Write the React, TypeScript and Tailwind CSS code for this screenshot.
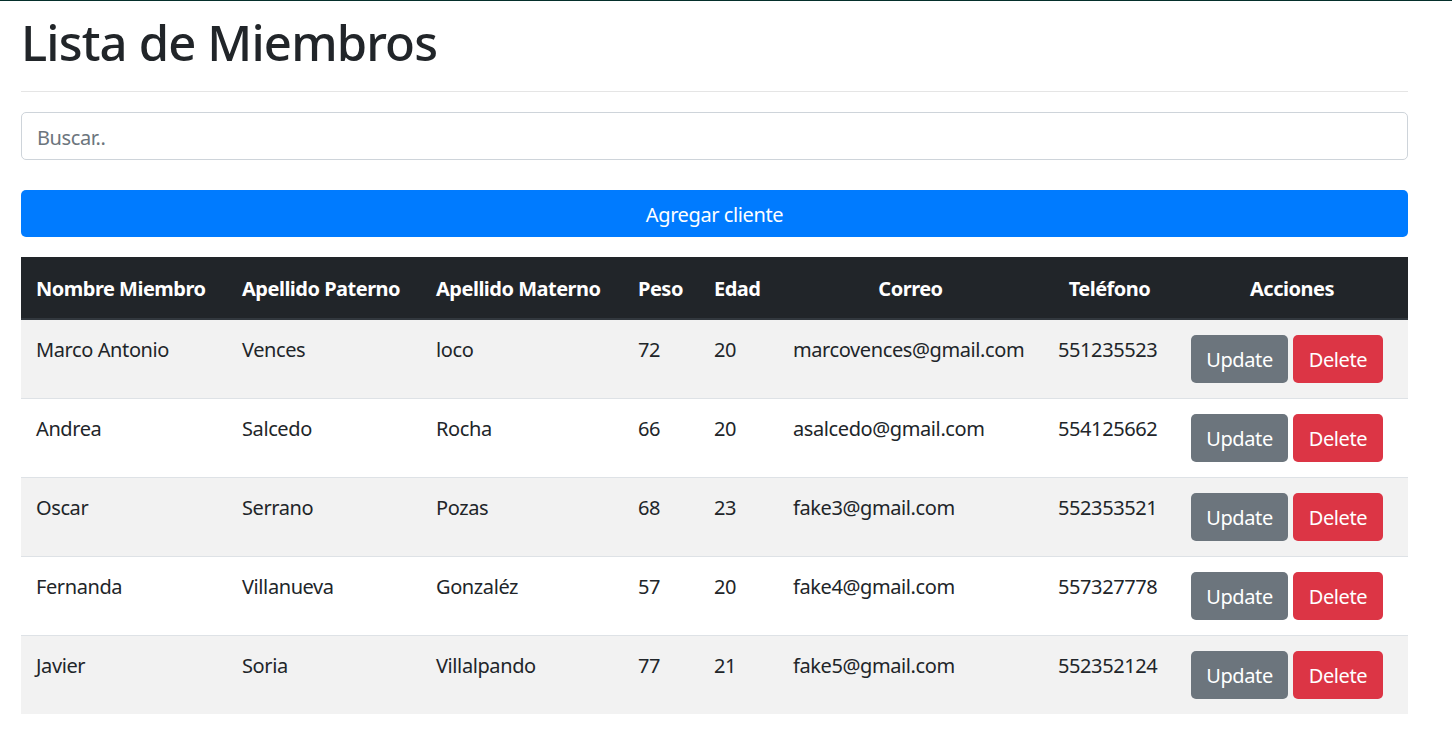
import React from "react";

interface Miembro {
  nombre: string;
  paterno: string;
  materno: string;
  peso: number;
  edad: number;
  correo: string;
  telefono: string;
}

const miembros: Miembro[] = [
  { nombre: "Marco Antonio", paterno: "Vences", materno: "loco", peso: 72, edad: 20, correo: "marcovences@gmail.com", telefono: "551235523" },
  { nombre: "Andrea", paterno: "Salcedo", materno: "Rocha", peso: 66, edad: 20, correo: "asalcedo@gmail.com", telefono: "554125662" },
  { nombre: "Oscar", paterno: "Serrano", materno: "Pozas", peso: 68, edad: 23, correo: "fake3@gmail.com", telefono: "552353521" },
  { nombre: "Fernanda", paterno: "Villanueva", materno: "Gonzaléz", peso: 57, edad: 20, correo: "fake4@gmail.com", telefono: "557327778" },
  { nombre: "Javier", paterno: "Soria", materno: "Villalpando", peso: 77, edad: 21, correo: "fake5@gmail.com", telefono: "552352124" },
];

const App: React.FC = () => {
  return (
    <div className="min-h-screen bg-white text-[#212529] font-['Noto_Sans','Open_Sans',sans-serif] text-[20px] leading-[30px] tracking-[-0.4px]">
      <div className="h-px bg-[#042f2b]" />
      <div className="ml-[21px] w-[1387px]">
        {/* Title */}
        <h1 className="mt-[11px] text-[49px] leading-[60px] font-medium tracking-[-0.85px]">Lista de Miembros</h1>
        <hr className="mt-[19px] border-t border-[#e5e5e5]" />

        {/* Search */}
        <input
          type="text"
          placeholder="Buscar.."
          className="mt-[20px] block w-full h-[48px] px-[15px] pt-[3px] border border-[#ced4da] rounded-[5px] outline-none placeholder:text-[#6c757d]"
        />

        <button className="mt-[30px] block w-full h-[47px] pt-[2px] bg-[#007bff] text-white rounded-[5px]">
          Agregar cliente
        </button>

        {/* Table */}
        <table className="mt-[20px] w-full table-fixed">
          <colgroup>
            <col className="w-[206px]" />
            <col className="w-[194px]" />
            <col className="w-[202px]" />
            <col className="w-[76px]" />
            <col className="w-[79px]" />
            <col className="w-[265px]" />
            <col className="w-[133px]" />
            <col className="w-[232px]" />
          </colgroup>
          <thead className="bg-[#212529] text-white tracking-[-0.5px]">
            <tr>
              <th className="px-[15px] pt-[17px] pb-[14px] text-left font-bold border-b-2 border-[#32383e] whitespace-nowrap">Nombre Miembro</th>
              <th className="px-[15px] pt-[17px] pb-[14px] text-left font-bold border-b-2 border-[#32383e] whitespace-nowrap">Apellido Paterno</th>
              <th className="px-[15px] pt-[17px] pb-[14px] text-left font-bold border-b-2 border-[#32383e] whitespace-nowrap">Apellido Materno</th>
              <th className="px-[15px] pt-[17px] pb-[14px] text-left font-bold border-b-2 border-[#32383e]">Peso</th>
              <th className="px-[15px] pt-[17px] pb-[14px] text-left font-bold border-b-2 border-[#32383e]">Edad</th>
              <th className="px-[15px] pt-[17px] pb-[14px] text-center font-bold border-b-2 border-[#32383e]">Correo</th>
              <th className="px-[15px] pt-[17px] pb-[14px] text-center font-bold border-b-2 border-[#32383e]">Teléfono</th>
              <th className="px-[15px] pt-[17px] pb-[14px] text-center font-bold border-b-2 border-[#32383e]">Acciones</th>
            </tr>
          </thead>
          <tbody>
            {miembros.map((m, i) => (
              <tr key={m.telefono} className={`border-t border-[#dee2e6] ${i % 2 === 0 ? "bg-[#f2f2f2]" : "bg-white"}`}>
                <td className="p-[15px] align-top whitespace-nowrap">{m.nombre}</td>
                <td className="p-[15px] align-top">{m.paterno}</td>
                <td className="p-[15px] align-top">{m.materno}</td>
                <td className="p-[15px] align-top">{m.peso}</td>
                <td className="p-[15px] align-top">{m.edad}</td>
                <td className="p-[15px] align-top whitespace-nowrap">{m.correo}</td>
                <td className="p-[15px] align-top">{m.telefono}</td>
                <td className="p-[15px] align-top">
                  <div className="flex gap-[5px]">
                    <button className="w-[97px] h-[48px] pt-[2px] rounded-[5px] bg-[#6c757d] text-white">Update</button>
                    <button className="w-[90px] h-[48px] pt-[2px] rounded-[5px] bg-[#dc3545] text-white">Delete</button>
                  </div>
                </td>
              </tr>
            ))}
          </tbody>
        </table>
      </div>
    </div>
  );
};

export default App;
